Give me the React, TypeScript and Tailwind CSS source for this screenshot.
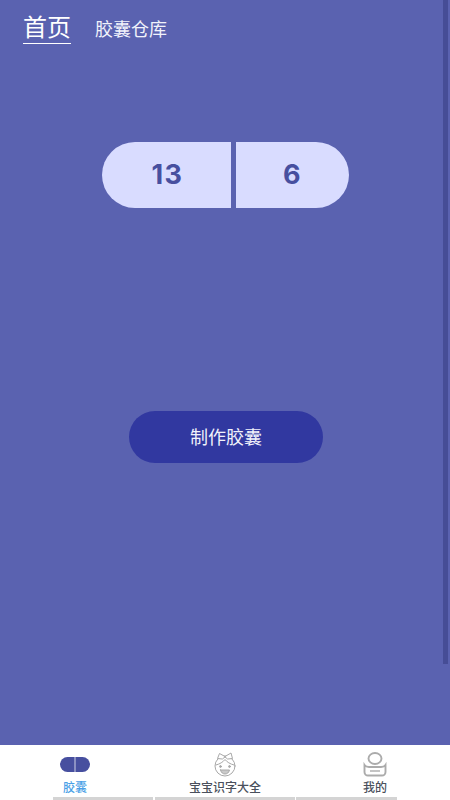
const cjk = "font-['Roboto','Noto_Sans_CJK_SC',sans-serif]";

function CapsuleIcon() {
  return (
    <svg width="30" height="15" viewBox="0 0 30 15">
      <path d="M7.5 0H14.6V15H7.5A7.5 7.5 0 0 1 7.5 0Z" fill="#474f9f" />
      <path d="M15.4 0H22.5A7.5 7.5 0 0 1 22.5 15H15.4Z" fill="#474f9f" />
    </svg>
  );
}

function BabyIcon() {
  return (
    <svg width="26" height="25" viewBox="0 0 26 25" fill="none" stroke="#a8a8a8" strokeWidth="1" strokeLinecap="round" strokeLinejoin="round">
      <circle cx="13" cy="14" r="10" />
      <path d="M13 4.5 7.5 1.5 5.5 6.5 10 7ZM13 4.5 19 1 20.5 6.5 16 7Z" fill="#fff" />
      <path d="M4 13C8 12 11 10 13 7.5 15 10 18 12 22 13" />
      <circle cx="8.5" cy="14.5" r="0.9" fill="#a8a8a8" />
      <circle cx="17.5" cy="14.5" r="0.9" fill="#a8a8a8" />
      <path d="M8.5 18H17.5C16.8 21 14.8 22 13 22S9.2 21 8.5 18Z" fill="#c9c9c9" />
    </svg>
  );
}

function PersonIcon() {
  return (
    <svg width="24" height="25" viewBox="0 0 24 25" fill="none" stroke="#ababab" strokeWidth="1.9">
      <ellipse cx="12" cy="6.5" rx="6.5" ry="5.5" />
      <path d="M1.5 13V20A3.5 3.5 0 0 0 5 23.5H19A3.5 3.5 0 0 0 22.5 20V13C21.5 14.5 20 15 18 15H6C4 15 2.5 14.5 1.5 13Z" />
      <path d="M7 19H17" strokeWidth="1.4" />
    </svg>
  );
}

export default function App() {
  return (
    <div className={`${cjk} relative flex h-[800px] w-[450px] flex-col overflow-hidden bg-[#5a62b0]`}>
      <main className="flex flex-1 flex-col">
        <header className="flex items-start pl-[23px] pt-[14px]">
          <div className="border-b-[1.5px] border-white pb-[1px] text-[24px] leading-[28px] text-white">首页</div>
          <div className="ml-[24px] mt-[5px] text-[18px] leading-[22px] text-[#f1f2fb]">胶囊仓库</div>
        </header>

        <div className="ml-[102px] mt-[98px] flex h-[66px] w-[247px] gap-[5px] font-['Inter',sans-serif] text-[27px] font-bold tracking-[1.5px] text-[#474f9f]">
          <div className="flex w-[129px] items-center justify-center rounded-l-[33px] bg-[#d9dcff] pl-[2px] pt-[1px]">13</div>
          <div className="flex flex-1 items-center justify-center rounded-r-[33px] bg-[#d9dcff] pt-[1px]">6</div>
        </div>

        <button className="ml-[129px] mt-[203px] flex h-[52px] w-[194px] items-center justify-center rounded-full bg-[#3138a0] text-[18px] text-[#f1f2fb]">
          制作胶囊
        </button>
      </main>

      <nav className="flex h-[55px] bg-white text-[12px] font-medium leading-[14px]">
        <div className="flex w-[150px] flex-col items-center pt-[12px]">
          <CapsuleIcon />
          <span className="mt-[9px] text-[#4a9fe6]">胶囊</span>
        </div>
        <div className="flex w-[150px] flex-col items-center pt-[7px]">
          <BabyIcon />
          <span className="mt-[4px] text-[#4a505c]">宝宝识字大全</span>
        </div>
        <div className="flex w-[150px] flex-col items-center pt-[7px]">
          <PersonIcon />
          <span className="mt-[4px] text-[#4a505c]">我的</span>
        </div>
      </nav>

      <div className="absolute bottom-0 left-[53px] h-[3px] w-[100px] bg-[#d4d4d4]" />
      <div className="absolute bottom-0 left-[155px] h-[3px] w-[140px] bg-[#d4d4d4]" />
      <div className="absolute bottom-0 left-[296px] h-[3px] w-[101px] bg-[#d4d4d4]" />
      <div className="absolute right-[2px] top-0 h-[664px] w-[5px] bg-[#464d96]" />
    </div>
  );
}
